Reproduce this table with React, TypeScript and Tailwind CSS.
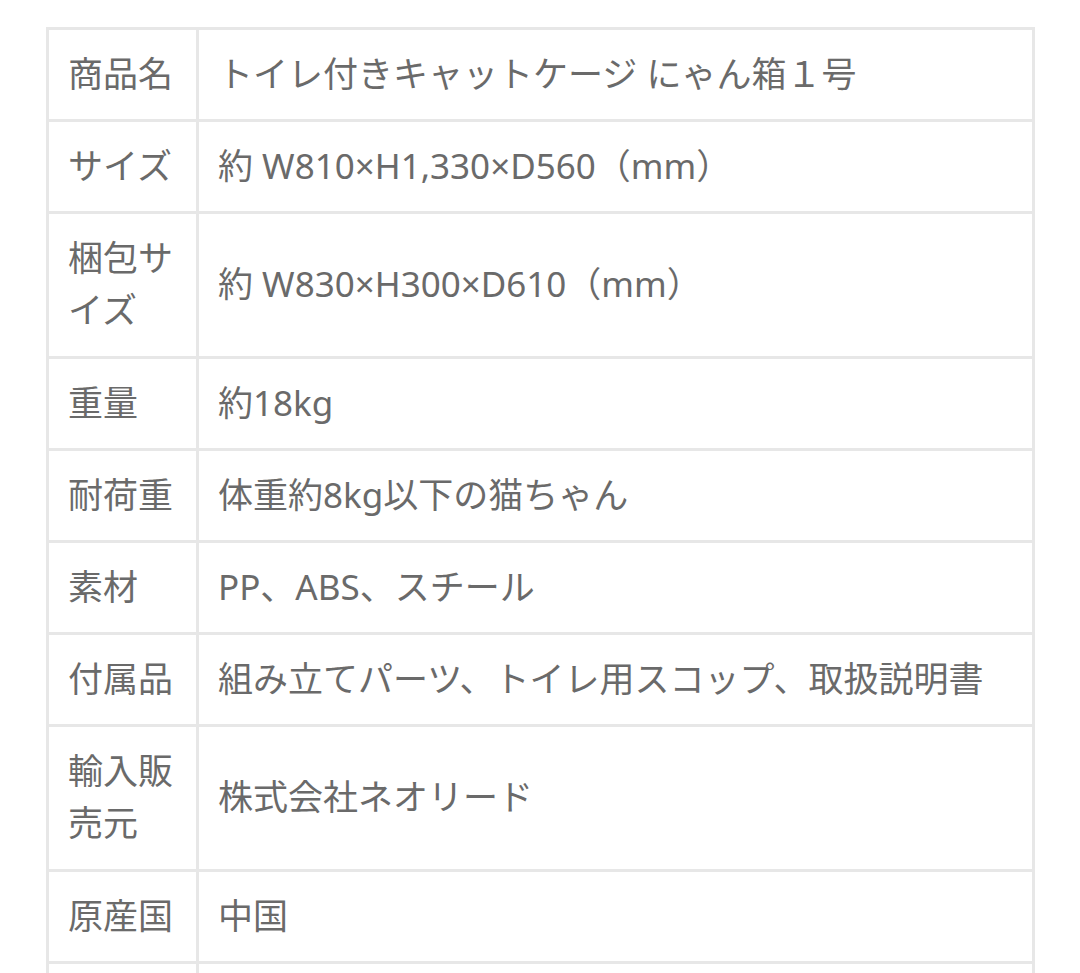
import React from 'react';

const rows: { label: string; value: string }[] = [
  { label: '商品名', value: 'トイレ付きキャットケージ にゃん箱１号' },
  { label: 'サイズ', value: '約 W810×H1,330×D560（mm）' },
  { label: '梱包サイズ', value: '約 W830×H300×D610（mm）' },
  { label: '重量', value: '約18kg' },
  { label: '耐荷重', value: '体重約8kg以下の猫ちゃん' },
  { label: '素材', value: 'PP、ABS、スチール' },
  { label: '付属品', value: '組み立てパーツ、トイレ用スコップ、取扱説明書' },
  { label: '輸入販売元', value: '株式会社ネオリード' },
  { label: '原産国', value: '中国' },
  { label: '\u00a0', value: '\u00a0' },
];

export default function App() {
  return (
    <div className="min-h-screen bg-white pt-[27px] pl-[46px] font-['Noto_Sans','Noto_Sans_CJK_JP',sans-serif] text-[#6a6a6a]">
      <table className="w-[989px] table-fixed border-collapse border-[3px] border-[#e7e7e7] text-[35px] leading-[52px]">
        <colgroup>
          <col className="w-[150px]" />
          <col />
        </colgroup>
        <tbody>
          {rows.map((r, i) => (
            <tr key={i}>
              <th className="border-[3px] border-[#e7e7e7] pl-[19px] pr-[6px] pt-[18px] pb-[19.2px] text-left align-middle font-normal">
                {r.label}
              </th>
              <td className="border-[3px] border-[#e7e7e7] px-[19px] pt-[18px] pb-[19.2px] align-middle">
                {r.value}
              </td>
            </tr>
          ))}
        </tbody>
      </table>
    </div>
  );
}
